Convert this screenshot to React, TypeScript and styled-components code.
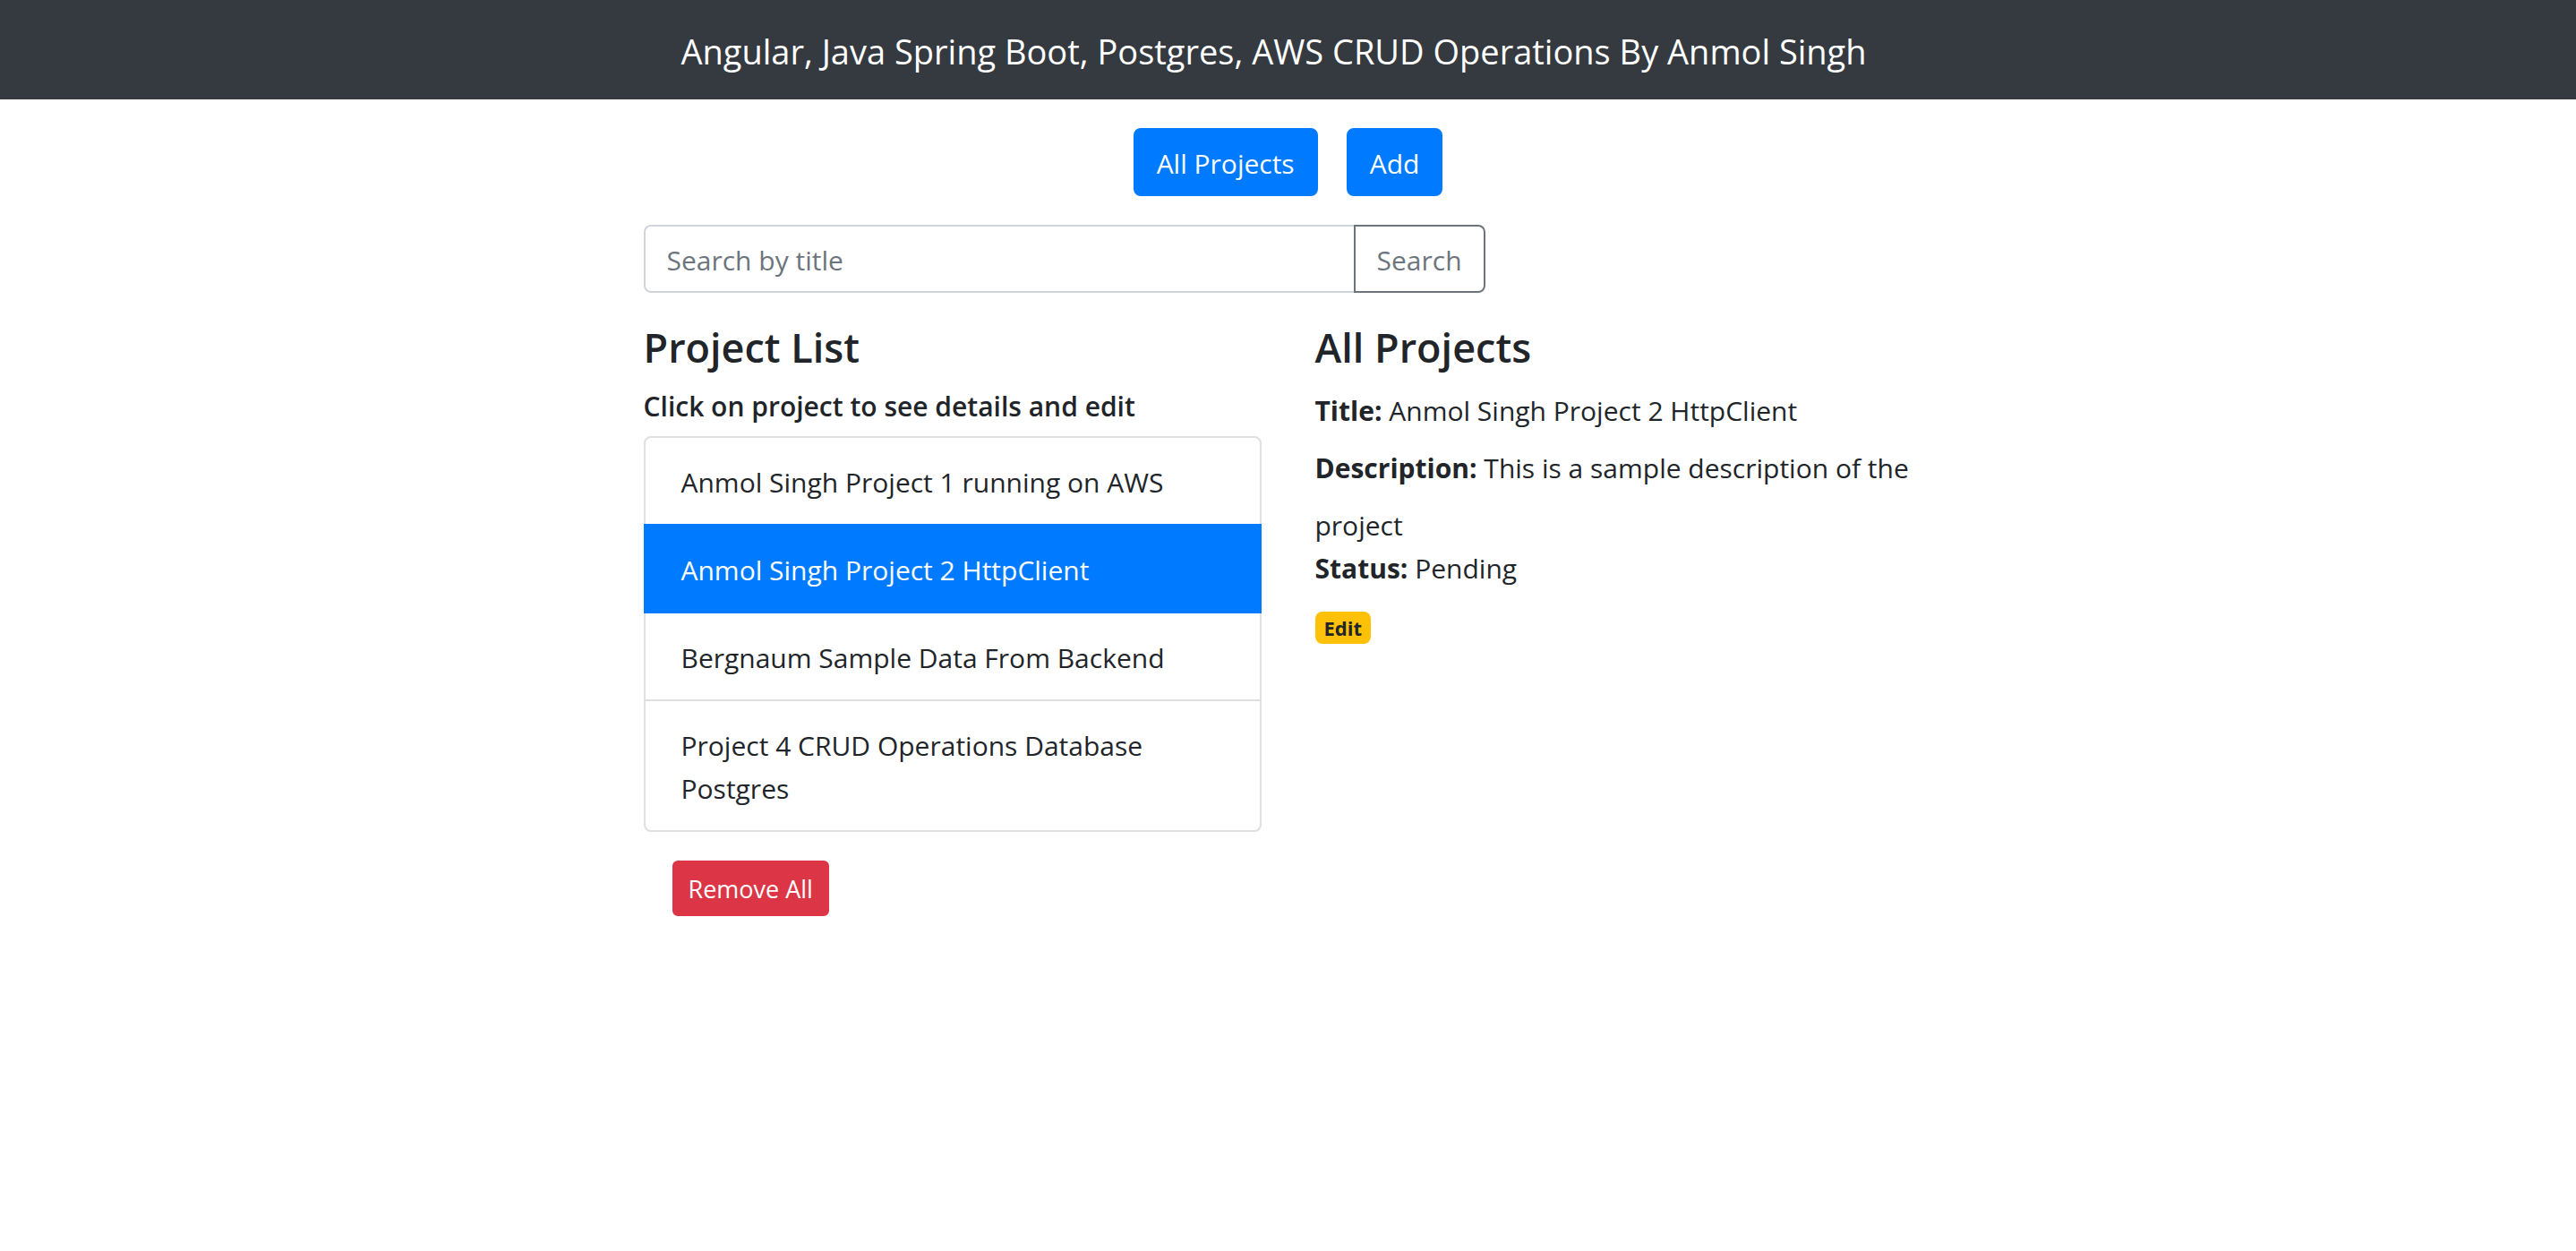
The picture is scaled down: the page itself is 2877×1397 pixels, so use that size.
import React, { useState } from "react";
import styled, { createGlobalStyle, css } from "styled-components";

const GlobalStyle = createGlobalStyle`
  *, *::before, *::after { box-sizing: border-box; }
  body {
    margin: 0;
    background: #fff;
    color: #212529;
    font-family: "Segoe UI", "Open Sans", "Noto Sans", sans-serif;
    font-size: 30px;
    line-height: 48px;
  }
  button, input { font-family: inherit; }
`;

const Navbar = styled.nav`
  display: flex;
  justify-content: center;
  padding: 16px 32px;
  background: #343a40;
`;

const Brand = styled.a`
  margin-right: 32px;
  padding: 12px 0 8px;
  color: #fff;
  font-size: 38px;
  line-height: 59px;
  text-decoration: none;
  white-space: nowrap;
`;

const Actions = styled.div`
  display: flex;
  justify-content: center;
  gap: 32px;
  margin: 32px 0;
`;

const buttonBase = css`
  padding: 14px 24px 10px;
  border: 2px solid transparent;
  border-radius: 8px;
  font-size: 30px;
  line-height: 48px;
  cursor: pointer;
`;

const PrimaryLink = styled.a`
  ${buttonBase}
  background: #007bff;
  background-clip: border-box;
  border-color: #007bff;
  color: #fff;
  text-decoration: none;
`;

const Content = styled.main`
  display: grid;
  grid-template-columns: 1fr 1fr;
  gap: 32px 60px;
  max-width: 1500px;
  margin: 0 auto;
  padding: 0 30px;
`;

const SearchForm = styled.form`
  grid-column: 1 / -1;
  display: flex;
  width: calc(66.67% - 20px);
`;

const SearchInput = styled.input`
  flex: 1;
  min-width: 0;
  padding: 14px 24px 10px;
  border: 2px solid #ced4da;
  border-right: 0;
  border-radius: 8px 0 0 8px;
  background: #fff;
  color: #495057;
  font-size: 30px;
  line-height: 48px;
  outline: none;
  &::placeholder { color: #6c757d; opacity: 1; }
`;

const SearchButton = styled.button`
  ${buttonBase}
  border-color: #6c757d;
  border-radius: 0 8px 8px 0;
  background: transparent;
  color: #6c757d;
`;

const Heading = styled.h4`
  margin: 0 0 18px;
  font-size: 45px;
  font-weight: 600;
  line-height: 58px;
`;

const SubHeading = styled.h6`
  margin: 0 0 14px;
  font-size: 30px;
  font-weight: 600;
  line-height: 38px;
`;

const ProjectList = styled.ul`
  margin: 0;
  padding: 0;
  list-style: none;
`;

const ProjectItem = styled.li<{ $active: boolean }>`
  padding: 26px 40px 22px;
  border: 2px solid #dfdfdf;
  cursor: pointer;
  & + & { border-top-width: 0; }
  &:first-child { border-radius: 8px 8px 0 0; }
  &:last-child { border-radius: 0 0 8px 8px; }
  ${({ $active }) =>
    $active &&
    css`
      && {
        border-color: #007bff;
        background: #007bff;
        color: #fff;
      }
      &&:not(:first-child) {
        position: relative;
        margin-top: -2px;
        border-top-width: 2px;
      }
    `}
`;

const RemoveButton = styled.button`
  margin: 32px;
  padding: 9px 16px 7px;
  border: 2px solid #dc3545;
  border-radius: 6px;
  background: #dc3545;
  color: #fff;
  font-size: 27px;
  line-height: 42px;
  cursor: pointer;
`;

const Label = styled.strong`
  display: inline-block;
  margin-bottom: 16px;
  font-weight: 700;
`;

const Badge = styled.a`
  display: inline-block;
  padding: 6px 10px;
  border-radius: 8px;
  background: #ffc107;
  color: #212529;
  font-size: 22px;
  font-weight: 700;
  line-height: 24px;
  text-decoration: none;
`;

const projects = [
  { title: "Anmol Singh Project 1 running on AWS" },
  { title: "Anmol Singh Project 2 HttpClient" },
  { title: "Bergnaum Sample Data From Backend" },
  { title: "Project 4 CRUD Operations Database Postgres" },
];

export default function App() {
  const [current, setCurrent] = useState(1);
  return (
    <>
      <GlobalStyle />
      <Navbar>
        <Brand href="#">
          Angular, Java Spring Boot, Postgres, AWS CRUD Operations By Anmol Singh
        </Brand>
      </Navbar>
      <Actions>
        <PrimaryLink href="#projects">All Projects</PrimaryLink>
        <PrimaryLink href="#add">Add</PrimaryLink>
      </Actions>
      <Content>
        <SearchForm onSubmit={(e) => e.preventDefault()}>
          <SearchInput type="text" placeholder="Search by title" aria-label="Search by title" />
          <SearchButton type="submit">Search</SearchButton>
        </SearchForm>
        <section>
          <Heading>Project List</Heading>
          <SubHeading>Click on project to see details and edit</SubHeading>
          <ProjectList>
            {projects.map((p, i) => (
              <ProjectItem key={p.title} $active={i === current} onClick={() => setCurrent(i)}>
                {p.title}
              </ProjectItem>
            ))}
          </ProjectList>
          <RemoveButton type="button">Remove All</RemoveButton>
        </section>
        <section>
          <Heading>All Projects</Heading>
          <div>
            <Label>Title:</Label> {projects[current].title}
          </div>
          <div>
            <Label>Description:</Label> This is a sample description of the project
          </div>
          <div>
            <Label>Status:</Label> Pending
          </div>
          <Badge href="#edit">Edit</Badge>
        </section>
      </Content>
    </>
  );
}
